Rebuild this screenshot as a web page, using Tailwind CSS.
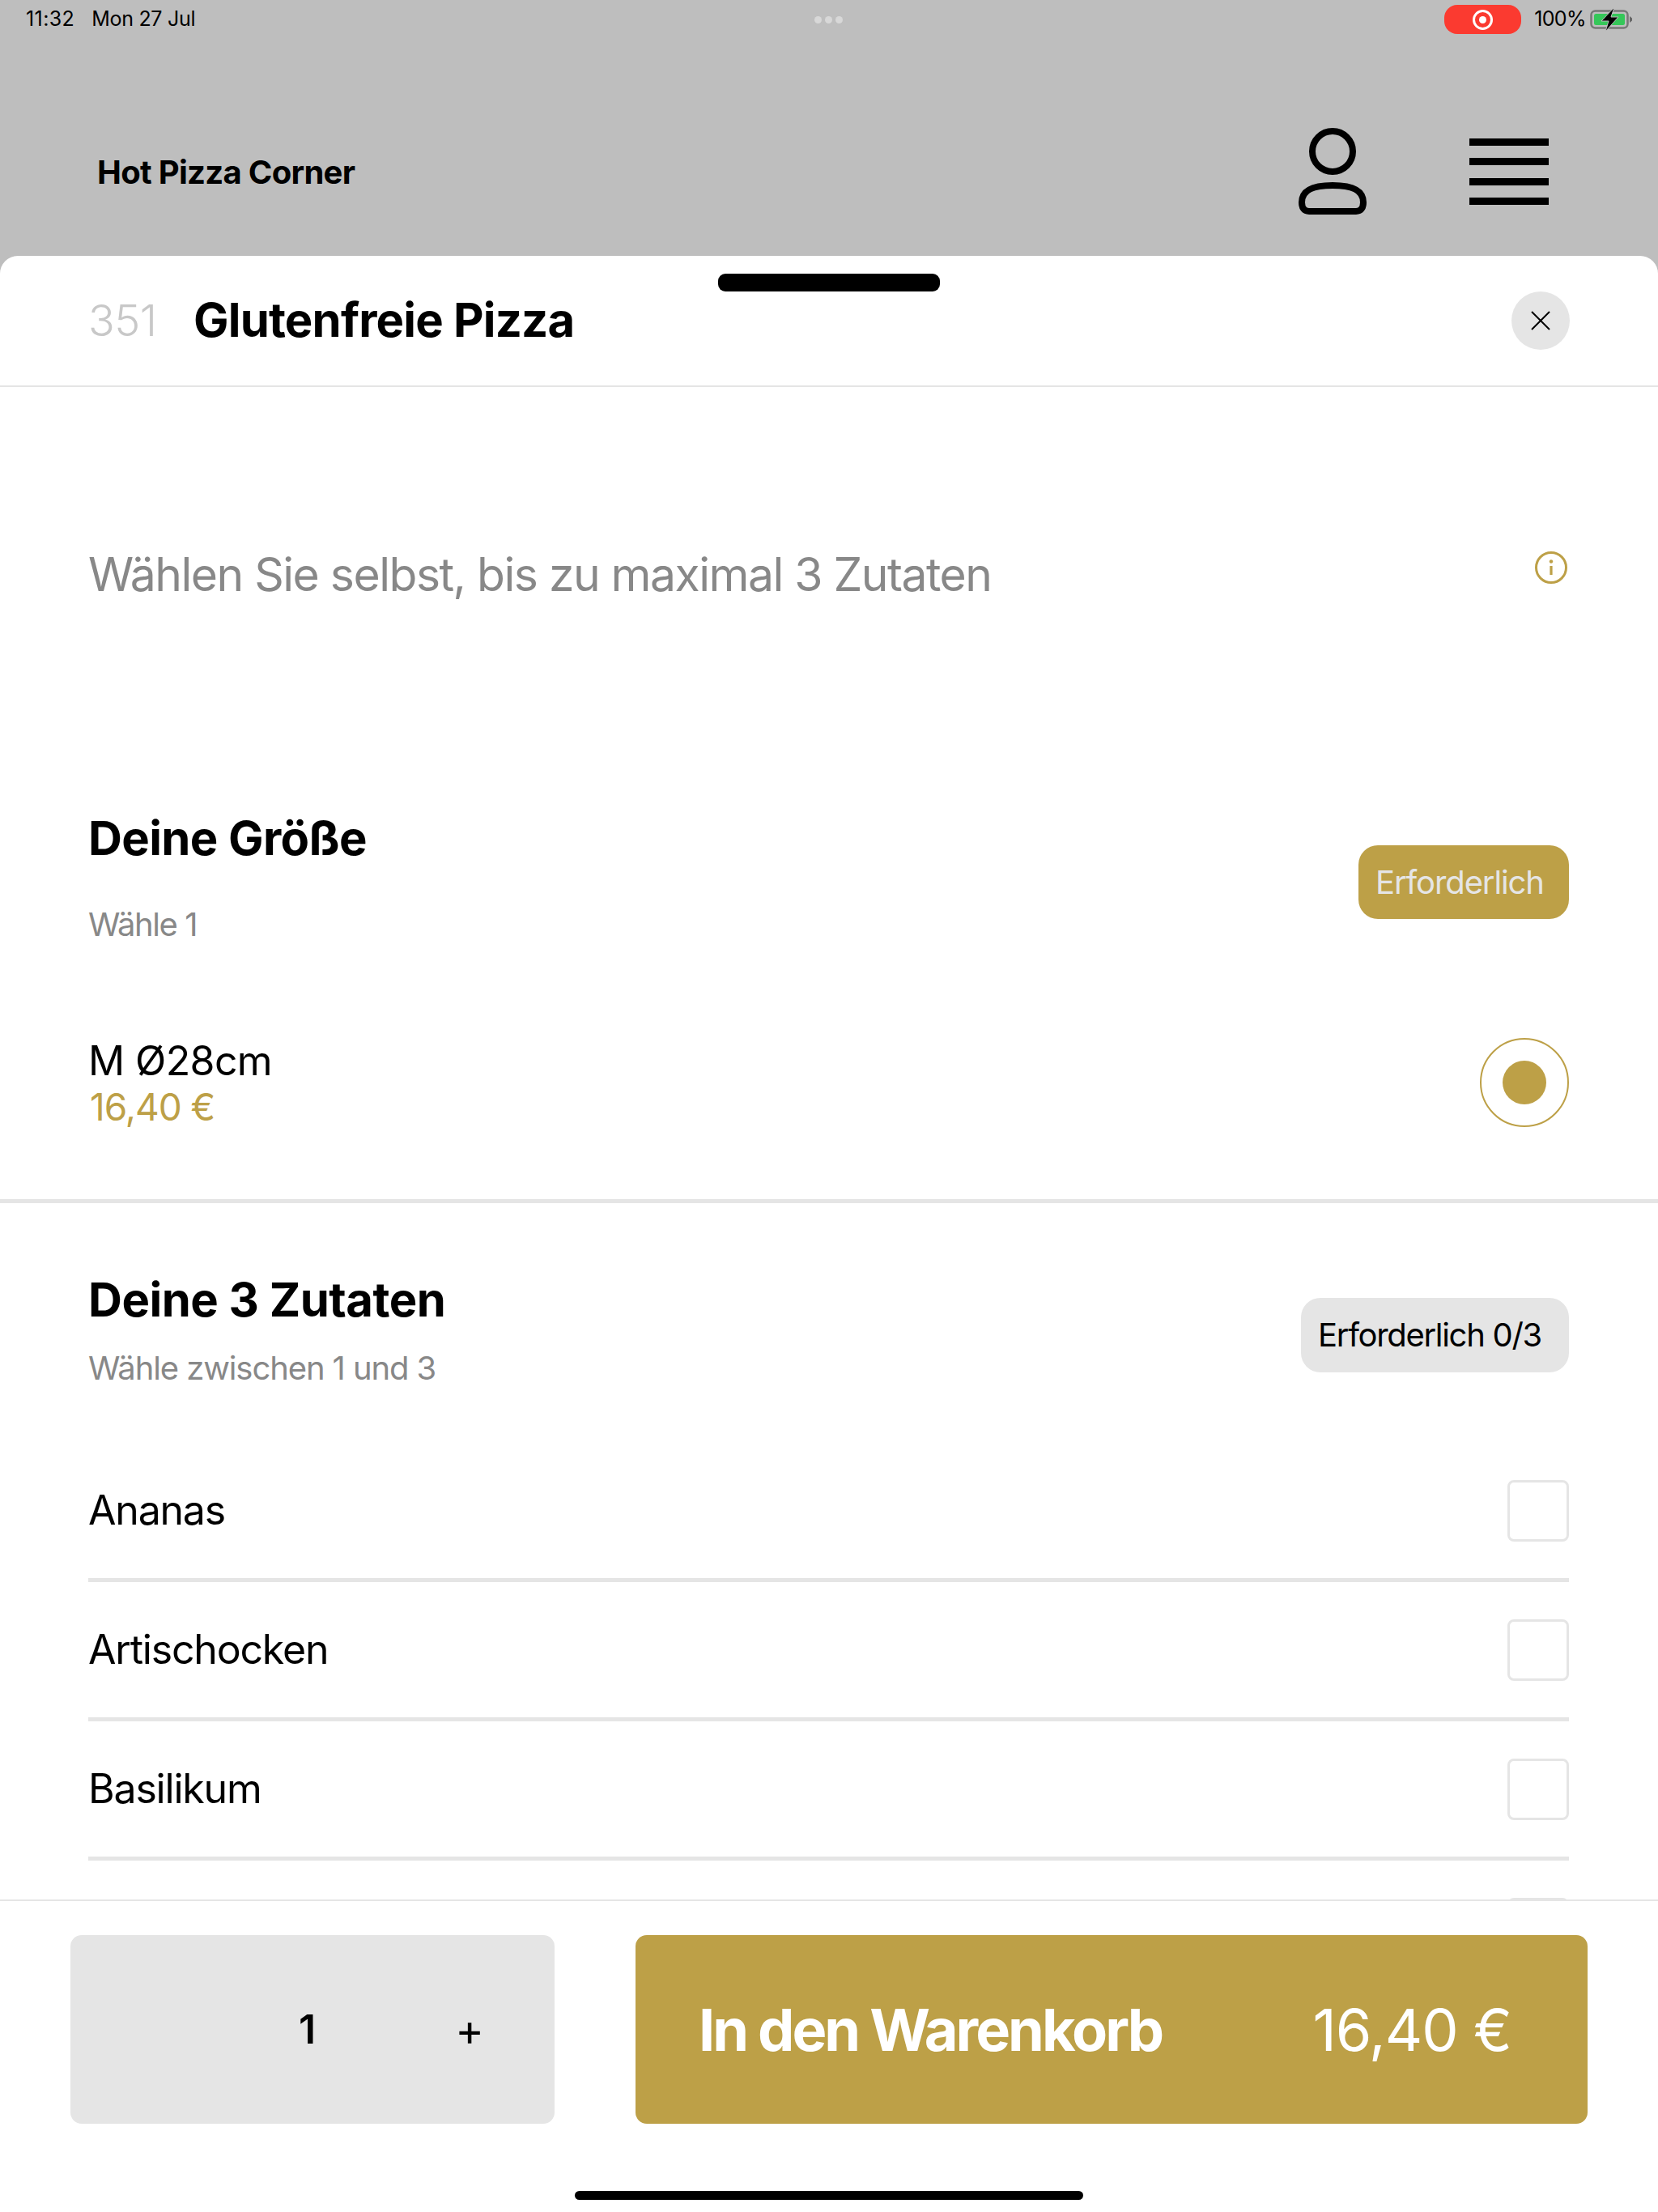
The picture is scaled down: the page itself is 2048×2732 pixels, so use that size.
<!DOCTYPE html>
<html lang="de">
<head>
  <meta charset="UTF-8" />
  <title>Glutenfreie Pizza</title>
  <script src="https://cdn.jsdelivr.net/npm/@tailwindcss/browser@4"></script>
</head>
<body class="bg-[#bebebe] font-['Inter','Liberation_Sans',sans-serif] text-black">
  <div class="flex flex-col w-[2048px] h-[2732px] overflow-hidden">

    <!-- status bar + top bar -->
    <header class="relative h-[316px] shrink-0">
      <div class="flex items-center h-[48px] pl-[32px] pr-[30px] text-[25px]">
        <span class="tracking-[0.4px]">11:32</span>
        <span class="ml-[21px] tracking-[-0.3px]">Mon 27 Jul</span>
        <div class="ml-auto flex items-center">
          <div class="flex items-center justify-center w-[95px] h-[36px] rounded-[16px] bg-[#fb3a30]">
            <div class="flex items-center justify-center w-[25px] h-[25px] rounded-full border-[3px] border-white">
              <div class="w-[9px] h-[9px] rounded-full bg-white"></div>
            </div>
          </div>
          <span class="ml-[16px] tracking-[-0.6px]">100%</span>
          <svg class="ml-[5px]" width="54" height="32" viewBox="0 0 54 32">
            <rect x="1.5" y="5.5" width="45" height="21" rx="5" fill="none" stroke="#777" stroke-width="2.5"/>
            <rect x="5" y="9" width="38" height="14" rx="2.5" fill="#35c759"/>
            <path d="M49 12 L52 14.5 V17.5 L49 20 Z" fill="#666"/>
            <path d="M30 1 L14 18 H23 L19 31 L35 13 H26 Z" fill="#000" stroke="#bebebe" stroke-width="1"/>
          </svg>
        </div>
      </div>
      <div class="absolute left-[1006px] top-[20px] flex gap-[4px]">
        <div class="w-[9px] h-[9px] rounded-full bg-[#d8d8d8]"></div>
        <div class="w-[9px] h-[9px] rounded-full bg-[#d8d8d8]"></div>
        <div class="w-[9px] h-[9px] rounded-full bg-[#d8d8d8]"></div>
      </div>
      <div class="flex items-center h-[268px] pt-[60px] pl-[120px]">
        <h1 class="text-[40px] font-bold tracking-[-0.7px] translate-y-[1px]">Hot Pizza Corner</h1>
        <svg class="ml-auto" width="86" height="108" viewBox="0 0 86 108">
          <circle cx="43" cy="29" r="25" fill="none" stroke="#000" stroke-width="8"/>
          <path d="M5 92 C5 76 20 71 43 71 C66 71 81 76 81 92 C81 99 78 103 72 103 H14 C8 103 5 99 5 92 Z" fill="none" stroke="#000" stroke-width="8"/>
        </svg>
        <div class="flex flex-col gap-[15.5px] ml-[126px] mr-[135px]">
          <div class="w-[98px] h-[9px] bg-black"></div>
          <div class="w-[98px] h-[9px] bg-black"></div>
          <div class="w-[98px] h-[9px] bg-black"></div>
          <div class="w-[98px] h-[9px] bg-black"></div>
        </div>
      </div>
    </header>

    <!-- sheet -->
    <main class="relative flex-1 flex flex-col min-h-0 bg-white rounded-t-[22px]">
      <div class="absolute left-[887px] top-[22px] w-[274px] h-[22px] rounded-[9px] bg-black"></div>

      <div class="flex items-center h-[162px] shrink-0 pl-[109px] pr-[109px] border-b-2 border-[#e5e5e5]">
        <span class="w-[130px] text-[54px] font-light text-[#c8c8c8] leading-none tracking-[-0.5px]">351</span>
        <h2 class="pb-[2px] text-[58px] font-bold tracking-[-0.8px] leading-none">Glutenfreie Pizza</h2>
        <button class="ml-auto flex items-center justify-center w-[72px] h-[72px] rounded-full bg-[#e5e5e5]">
          <svg width="26" height="26" viewBox="0 0 26 26"><path d="M2 2 L24 24 M24 2 L2 24" stroke="#000" stroke-width="2"/></svg>
        </button>
      </div>

      <div class="flex-1 min-h-0 overflow-hidden">
        <!-- intro -->
        <div class="flex justify-between h-[522px] pt-[197px] pl-[109px] pr-[112px]">
          <p class="text-[57px] leading-[70px] text-[#888888] tracking-[-1.5px]">Wählen Sie selbst, bis zu maximal 3 Zutaten</p>
          <svg class="mt-[6px]" width="40" height="40" viewBox="0 0 40 40">
            <circle cx="20" cy="20" r="18.5" fill="none" stroke="#bda047" stroke-width="3"/>
            <circle cx="20" cy="12.5" r="2.2" fill="#bda047"/>
            <path d="M20 18 V29" stroke="#bda047" stroke-width="3.2"/>
          </svg>
        </div>

        <!-- size -->
        <section class="pl-[109px] pr-[110px] h-[486px] border-b-[5px] border-[#e5e5e5]">
          <div class="flex justify-between">
            <div>
              <h3 class="text-[58px] leading-[70px] font-bold tracking-[-0.6px]">Deine Größe</h3>
              <p class="mt-[48px] text-[40px] leading-[48px] text-[#888888] tracking-[-1.4px]">Wähle 1</p>
            </div>
            <div class="mt-[44px] flex items-center w-[260px] h-[91px] pl-[21px] rounded-[24px] bg-[#bda047] text-[40px] text-[#e5e5e5] tracking-[-1.1px]">Erforderlich</div>
          </div>
          <div class="flex items-center justify-between mt-[114px]">
            <div>
              <div class="text-[50px] leading-[60px] tracking-[-0.6px]">M Ø28cm</div>
              <div class="ml-[2px] text-[46px] leading-[54px] text-[#bda047] tracking-[-1px]">16,40 €</div>
            </div>
            <div class="flex items-center justify-center w-[110px] h-[110px] rounded-full border-2 border-[#bda047]">
              <div class="w-[54px] h-[54px] rounded-full bg-[#bda047]"></div>
            </div>
          </div>
        </section>

        <!-- toppings -->
        <section class="pl-[109px] pr-[110px]">
          <div class="flex justify-between h-[296px] pt-[84px]">
            <div>
              <h3 class="text-[58px] leading-[70px] font-bold tracking-[-0.5px]">Deine 3 Zutaten</h3>
              <p class="mt-[26px] text-[40px] leading-[48px] text-[#888888] tracking-[-1.1px]">Wähle zwischen 1 und 3</p>
            </div>
            <div class="mt-[33px] flex items-center w-[331px] h-[92px] pl-[21px] rounded-[24px] bg-[#e5e5e5] text-[40px] tracking-[-1.3px]">Erforderlich 0/3</div>
          </div>
          <div class="flex items-center justify-between h-[172px] border-b-[5px] border-[#e5e5e5]">
            <span class="text-[50px] tracking-[-1.2px]">Ananas</span>
            <div class="w-[76px] h-[76px] rounded-[8px] border-[3px] border-[#e5e5e5]"></div>
          </div>
          <div class="flex items-center justify-between h-[172px] border-b-[5px] border-[#e5e5e5]">
            <span class="text-[50px] tracking-[-1.2px]">Artischocken</span>
            <div class="w-[76px] h-[76px] rounded-[8px] border-[3px] border-[#e5e5e5]"></div>
          </div>
          <div class="flex items-center justify-between h-[172px] border-b-[5px] border-[#e5e5e5]">
            <span class="text-[50px] tracking-[-1.2px]">Basilikum</span>
            <div class="w-[76px] h-[76px] rounded-[8px] border-[3px] border-[#e5e5e5]"></div>
          </div>
          <div class="flex justify-end pt-[46px]">
            <div class="w-[76px] h-[76px] rounded-[8px] border-[3px] border-[#e5e5e5]"></div>
          </div>
        </section>
      </div>

      <!-- footer -->
      <footer class="relative h-[386px] shrink-0 pt-[42px] pl-[87px] border-t-2 border-[#e5e5e5]">
        <div class="flex">
          <div class="flex items-center w-[598px] h-[233px] rounded-[14px] bg-[#e5e5e5]">
            <span class="ml-[282px] text-[50px] font-semibold">1</span>
            <span class="ml-[172px] text-[54px] leading-none">+</span>
          </div>
          <button class="flex items-center justify-between ml-[100px] w-[1176px] h-[233px] pl-[78px] pr-[94px] rounded-[14px] bg-[#bda047] text-white text-[72px]">
            <span class="font-bold tracking-[-3px]">In den Warenkorb</span>
            <span class="tracking-[-1px]">16,40 €</span>
          </button>
        </div>
        <div class="absolute left-[710px] top-[358px] w-[628px] h-[11px] rounded-full bg-black"></div>
      </footer>
    </main>
  </div>
</body>
</html>
